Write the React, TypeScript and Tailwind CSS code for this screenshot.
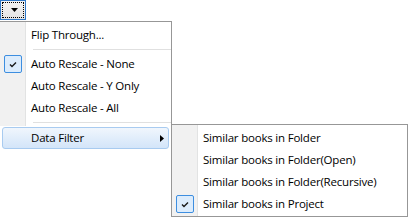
import React from "react";

const Check = () => (
  <div className="w-[18px] h-[18px] border border-[#3d8ee0] bg-[#dcecfc] rounded-[2px] flex items-center justify-center">
    <svg width="8" height="7" viewBox="0 0 8 7">
      <path d="M1 3.5 L3 5.5 L7 1.5" stroke="#1a1a1a" strokeWidth="1.4" fill="none" />
    </svg>
  </div>
);

const Item = ({ label, checked }: { label: string; checked?: boolean }) => (
  <div className="flex items-center h-[22px]">
    <div className="w-[25px] flex justify-center pl-[1px]">{checked ? <Check /> : null}</div>
    <span className="pl-[6px] whitespace-nowrap">{label}</span>
  </div>
);

const Sep = () => (
  <div className="h-[7px] flex items-center pl-[33px]">
    <div className="h-px w-full bg-[#e0e0e0]" />
  </div>
);

export default function App() {
  return (
    <div className="relative w-[408px] h-[217px] bg-white overflow-hidden text-[11.5px] tracking-[-0.2px] text-black font-['Segoe_UI','Open_Sans',sans-serif] leading-none">
      <div className="w-[26px] h-[20px] border border-[#2f78c8] bg-gradient-to-b from-[#f4f4f4] to-[#e4e4e4] p-[1px]">
        <div className="w-full h-full border border-dotted border-black flex items-center justify-center pl-[3px]">
          <svg width="7" height="4" viewBox="0 0 7 4">
            <path d="M0 0 H7 L3.5 4 Z" fill="#000" />
          </svg>
        </div>
      </div>

      <div className="absolute left-0 top-[21px] w-[172px] h-[129px] border-t border-r border-[#979797] bg-[linear-gradient(to_right,#f1f1f1_25px,#e2e3e3_25px,#e2e3e3_26px,#ffffff_26px)] pt-[2px]">
        <Item label="Flip Through..." />
        <Sep />
        <Item label="Auto Rescale - None" checked />
        <Item label="Auto Rescale - Y Only" />
        <Item label="Auto Rescale - All" />
        <Sep />
        <div className="h-[24px] py-[1px] bg-white">
          <div className="relative mx-[2px] h-[22px] rounded-[3px] border border-[#a8cbf0] bg-gradient-to-b from-[#f0f6fd] to-[#d3e5f9] flex items-center">
            <span className="pl-[28px]">Data Filter</span>
            <svg className="absolute right-[4px] top-[7px]" width="4" height="7" viewBox="0 0 4 7">
              <path d="M0 0 L4 3.5 L0 7 Z" fill="#000" />
            </svg>
          </div>
        </div>
      </div>

      <div className="absolute left-[171px] top-[124px] w-[237px] h-[93px] border border-[#979797] bg-[linear-gradient(to_right,#f1f1f1_25px,#e2e3e3_25px,#e2e3e3_26px,#ffffff_26px)] pt-[2px]">
        <Item label="Similar books in Folder" />
        <Item label="Similar books in Folder(Open)" />
        <Item label="Similar books in Folder(Recursive)" />
        <Item label="Similar books in Project" checked />
      </div>
    </div>
  );
}
